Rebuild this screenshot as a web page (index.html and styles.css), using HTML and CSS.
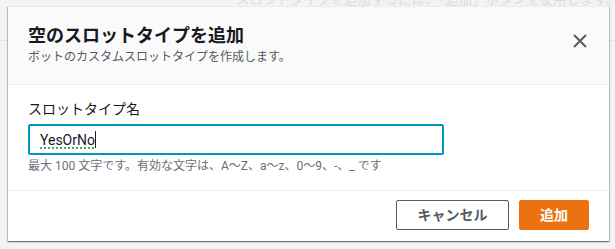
FILE: index.html
```html
<!DOCTYPE html>
<html lang="ja">
<head>
<meta charset="utf-8">
<link rel="stylesheet" href="styles.css">
</head>
<body>
<div class="page">
  <div class="page-text">スロットタイプを追加するには、「追加」ボタンを使用します。</div>
  <div class="page-line"></div>
</div>
<div class="modal">
  <div class="modal-header">
    <div class="titles">
      <h2 class="title">空のスロットタイプを追加</h2>
      <p class="subtitle">ボットのカスタムスロットタイプを作成します。</p>
    </div>
    <svg class="close" width="14" height="14" viewBox="0 0 14 14"><path d="M1 1 L13 13 M13 1 L1 13" stroke="#545b64" stroke-width="2" fill="none"/></svg>
  </div>
  <div class="modal-body">
    <div class="label">スロットタイプ名</div>
    <div class="input"><span class="value">YesOrNo</span><span class="caret"></span></div>
    <div class="hint">最大 100 文字です。有効な文字は、A〜Z、a〜z、0〜9、-、_ です</div>
  </div>
  <div class="modal-footer">
    <button class="btn btn-cancel">キャンセル</button>
    <button class="btn btn-primary">追加</button>
  </div>
</div>
</body>
</html>
```
FILE: styles.css
```css
* { box-sizing: border-box; }
html, body { margin: 0; padding: 0; }
body {
  width: 615px;
  height: 249px;
  overflow: hidden;
  background: #f2f3f3;
  font-family: Roboto, "Noto Sans CJK JP", sans-serif;
  color: #16191f;
  position: relative;
}
.page { height: 249px; position: relative; overflow: hidden; }
.page-text {
  padding: 0 0 0 236px;
  margin-top: -11px;
  font-size: 13.5px;
  line-height: 20px;
  color: #d9dede;
  white-space: nowrap;
}
.page-line {
  margin-top: 31px;
  height: 1px;
  background: #e4e8e8;
}
.modal {
  position: absolute;
  left: 8px;
  top: 6px;
  width: 601px;
  height: 235px;
  background: #fff;
  display: flex;
  flex-direction: column;
  box-shadow: 0 1px 1px 0 rgba(0,28,36,0.35), 1px 1px 1px 0 rgba(0,28,36,0.2), -1px 1px 1px 0 rgba(0,28,36,0.2);
  border-top: 1px solid #eaeded;
}
.modal-header {
  background: #fafafa;
  padding: 18px 20px 19px 20px;
  border-bottom: 1px solid #eaeded;
  display: flex;
  justify-content: space-between;
  align-items: flex-start;
}
.title {
  margin: 0;
  font-size: 18px;
  line-height: 22px;
  font-weight: 700;
  color: #16191f;
}
.subtitle {
  margin: 2px 0 0 0;
  font-size: 12px;
  line-height: 16px;
  color: #545b64;
}
.close { margin-top: 9px; margin-right: 2px; }
.modal-body {
  padding: 14px 20px 16px 20px;
  border-bottom: 1px solid #eaeded;
}
.label {
  font-size: 14px;
  line-height: 20px;
  color: #16191f;
}
.input {
  margin-top: 5px;
  width: 416px;
  height: 31px;
  border: 2px solid #0097c3;
  border-radius: 2px;
  padding: 0 0 0 10px;
  display: flex;
  align-items: center;
  font-size: 14px;
  color: #16191f;
}
.value {
  text-decoration: underline dotted #3cb34a;
  text-decoration-thickness: 2px;
  text-underline-offset: 3px;
}
.caret {
  width: 1px;
  height: 17px;
  background: #16191f;
}
.hint {
  margin-top: 3px;
  font-size: 12px;
  line-height: 16px;
  color: #687078;
}
.modal-footer {
  flex: 1;
  display: flex;
  justify-content: flex-end;
  align-items: flex-start;
  gap: 10px;
  padding: 9px 20px 0 20px;
}
.btn {
  height: 30px;
  font-family: Roboto, "Noto Sans CJK JP", sans-serif;
  font-size: 14px;
  font-weight: 700;
  border-radius: 2px;
  padding: 0;
  line-height: 28px;
}
.btn-cancel {
  width: 113px;
  background: #fff;
  border: 1px solid #545b64;
  color: #545b64;
}
.btn-primary {
  width: 70px;
  background: #ec7211;
  border: 1px solid #ec7211;
  color: #fff;
}
```
